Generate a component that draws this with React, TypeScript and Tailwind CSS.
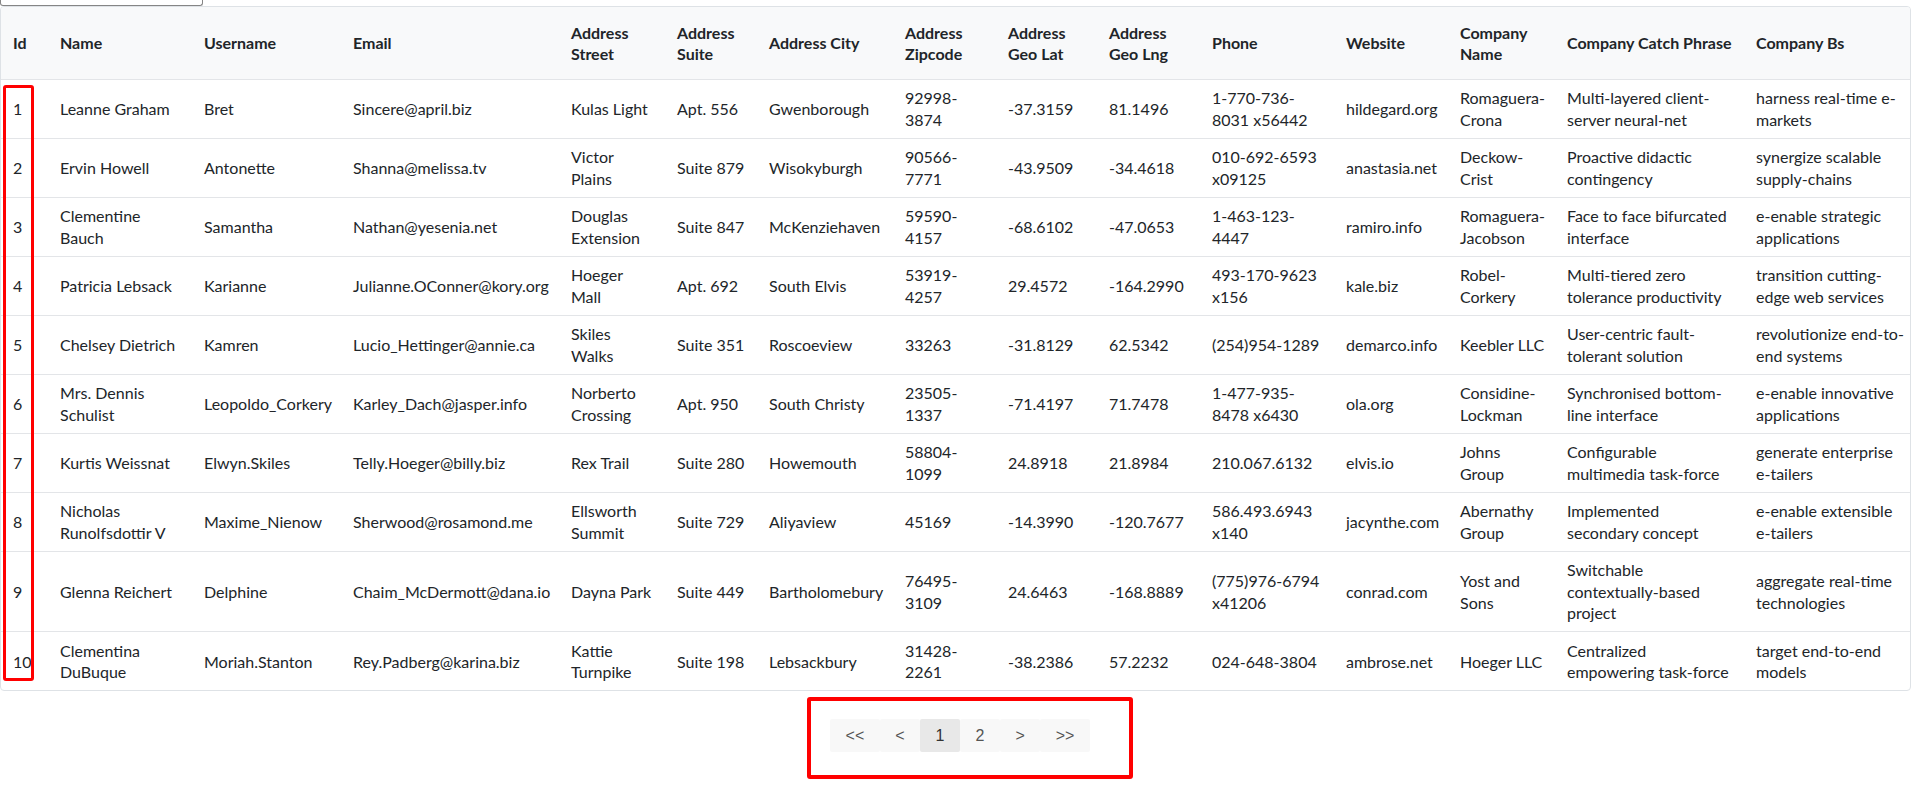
import React from "react";

type User = {
  id: number;
  name: string;
  username: string;
  email: string;
  street: string;
  suite: string;
  city: string;
  zipcode: string;
  lat: string;
  lng: string;
  phone: string;
  website: string;
  company: string;
  catchPhrase: string;
  bs: string;
};

const users: User[] = [
  { id: 1, name: "Leanne Graham", username: "Bret", email: "Sincere@april.biz", street: "Kulas Light", suite: "Apt. 556", city: "Gwenborough", zipcode: "92998-3874", lat: "-37.3159", lng: "81.1496", phone: "1-770-736-8031 x56442", website: "hildegard.org", company: "Romaguera-Crona", catchPhrase: "Multi-layered client-server neural-net", bs: "harness real-time e-markets" },
  { id: 2, name: "Ervin Howell", username: "Antonette", email: "Shanna@melissa.tv", street: "Victor Plains", suite: "Suite 879", city: "Wisokyburgh", zipcode: "90566-7771", lat: "-43.9509", lng: "-34.4618", phone: "010-692-6593 x09125", website: "anastasia.net", company: "Deckow-Crist", catchPhrase: "Proactive didactic contingency", bs: "synergize scalable supply-chains" },
  { id: 3, name: "Clementine Bauch", username: "Samantha", email: "Nathan@yesenia.net", street: "Douglas Extension", suite: "Suite 847", city: "McKenziehaven", zipcode: "59590-4157", lat: "-68.6102", lng: "-47.0653", phone: "1-463-123-4447", website: "ramiro.info", company: "Romaguera-Jacobson", catchPhrase: "Face to face bifurcated interface", bs: "e-enable strategic applications" },
  { id: 4, name: "Patricia Lebsack", username: "Karianne", email: "Julianne.OConner@kory.org", street: "Hoeger Mall", suite: "Apt. 692", city: "South Elvis", zipcode: "53919-4257", lat: "29.4572", lng: "-164.2990", phone: "493-170-9623 x156", website: "kale.biz", company: "Robel-Corkery", catchPhrase: "Multi-tiered zero tolerance productivity", bs: "transition cutting-edge web services" },
  { id: 5, name: "Chelsey Dietrich", username: "Kamren", email: "Lucio_Hettinger@annie.ca", street: "Skiles Walks", suite: "Suite 351", city: "Roscoeview", zipcode: "33263", lat: "-31.8129", lng: "62.5342", phone: "(254)954-1289", website: "demarco.info", company: "Keebler LLC", catchPhrase: "User-centric fault-tolerant solution", bs: "revolutionize end-to-end systems" },
  { id: 6, name: "Mrs. Dennis Schulist", username: "Leopoldo_Corkery", email: "Karley_Dach@jasper.info", street: "Norberto Crossing", suite: "Apt. 950", city: "South Christy", zipcode: "23505-1337", lat: "-71.4197", lng: "71.7478", phone: "1-477-935-8478 x6430", website: "ola.org", company: "Considine-Lockman", catchPhrase: "Synchronised bottom-line interface", bs: "e-enable innovative applications" },
  { id: 7, name: "Kurtis Weissnat", username: "Elwyn.Skiles", email: "Telly.Hoeger@billy.biz", street: "Rex Trail", suite: "Suite 280", city: "Howemouth", zipcode: "58804-1099", lat: "24.8918", lng: "21.8984", phone: "210.067.6132", website: "elvis.io", company: "Johns Group", catchPhrase: "Configurable multimedia task-force", bs: "generate enterprise e-tailers" },
  { id: 8, name: "Nicholas Runolfsdottir V", username: "Maxime_Nienow", email: "Sherwood@rosamond.me", street: "Ellsworth Summit", suite: "Suite 729", city: "Aliyaview", zipcode: "45169", lat: "-14.3990", lng: "-120.7677", phone: "586.493.6943 x140", website: "jacynthe.com", company: "Abernathy Group", catchPhrase: "Implemented secondary concept", bs: "e-enable extensible e-tailers" },
  { id: 9, name: "Glenna Reichert", username: "Delphine", email: "Chaim_McDermott@dana.io", street: "Dayna Park", suite: "Suite 449", city: "Bartholomebury", zipcode: "76495-3109", lat: "24.6463", lng: "-168.8889", phone: "(775)976-6794 x41206", website: "conrad.com", company: "Yost and Sons", catchPhrase: "Switchable contextually-based project", bs: "aggregate real-time technologies" },
  { id: 10, name: "Clementina DuBuque", username: "Moriah.Stanton", email: "Rey.Padberg@karina.biz", street: "Kattie Turnpike", suite: "Suite 198", city: "Lebsackbury", zipcode: "31428-2261", lat: "-38.2386", lng: "57.2232", phone: "024-648-3804", website: "ambrose.net", company: "Hoeger LLC", catchPhrase: "Centralized empowering task-force", bs: "target end-to-end models" },
];

// header label + column width in px (cell padding is px-3 unless pad says otherwise)
const columns: { label: string; key: keyof User; width: string; pad?: string }[] = [
  { label: "Id", key: "id", width: "w-[47px]" },
  { label: "Name", key: "name", width: "w-[144px]" },
  { label: "Username", key: "username", width: "w-[149px]" },
  { label: "Email", key: "email", width: "w-[218px]" },
  { label: "Address Street", key: "street", width: "w-[106px]" },
  { label: "Address Suite", key: "suite", width: "w-[92px]" },
  { label: "Address City", key: "city", width: "w-[136px]" },
  { label: "Address Zipcode", key: "zipcode", width: "w-[103px]" },
  { label: "Address Geo Lat", key: "lat", width: "w-[101px]" },
  { label: "Address Geo Lng", key: "lng", width: "w-[103px]" },
  { label: "Phone", key: "phone", width: "w-[134px]" },
  { label: "Website", key: "website", width: "w-[114px]" },
  { label: "Company Name", key: "company", width: "w-[107px]", pad: "pl-3 pr-[9px]" },
  { label: "Company Catch Phrase", key: "catchPhrase", width: "w-[189px]" },
  { label: "Company Bs", key: "bs", width: "", pad: "pl-3 pr-0" },
];

const pages = [
  { label: "<<", active: false },
  { label: "<", active: false },
  { label: "1", active: true },
  { label: "2", active: false },
  { label: ">", active: false },
  { label: ">>", active: false },
];

export default function App() {
  return (
    <div className="relative min-h-screen bg-white font-['Lato',sans-serif] text-[#212529]">
      {/* search input, scrolled mostly out of view */}
      <div className="h-[6px] w-[203px] rounded-b-[3px] border border-t-0 border-[#858585]"></div>

      {/* Users table */}
      <div className="overflow-hidden rounded-[4px] border border-[#dee2e6]">
        <table className="w-full table-fixed border-collapse text-left text-[16px] leading-[21.4px]">
          <colgroup>
            {columns.map((col) => (
              <col key={col.key} className={col.width} />
            ))}
          </colgroup>
          <thead className="bg-[#f8f9fa]">
            <tr>
              {columns.map((col) => (
                <th key={col.key} className={`${col.pad ?? "px-3"} py-[14.5px] align-middle font-bold`}>
                  {col.label}
                </th>
              ))}
            </tr>
          </thead>
          <tbody>
            {users.map((user) => (
              <tr key={user.id} className="border-t border-[#e3e5e8]">
                {columns.map((col) => (
                  <td key={col.key} className={`${col.pad ?? "px-3"} py-[7.6px] align-middle`}>
                    {user[col.key]}
                  </td>
                ))}
              </tr>
            ))}
          </tbody>
        </table>
      </div>

      {/* Pagination */}
      <div className="mt-[28px] flex justify-center pl-[9px] font-['Liberation_Sans',Arial,sans-serif]">
        {pages.map((p) => (
          <button
            key={p.label}
            className={`flex h-[33px] items-center rounded-[2px] px-[15.5px] text-[16px] ${
              p.active ? "bg-[#e8e8e8] text-[#333]" : "bg-[#f8f8f8] text-[#555]"
            }`}
          >
            {p.label}
          </button>
        ))}
      </div>

      {/* red highlight annotations */}
      <div className="pointer-events-none absolute left-[3px] top-[85px] h-[596px] w-[31px] rounded-[3px] border-[3px] border-[#ff0000]"></div>
      <div className="pointer-events-none absolute left-[807px] top-[697px] h-[82px] w-[326px] rounded-[3px] border-4 border-[#ff0000]"></div>
    </div>
  );
}
